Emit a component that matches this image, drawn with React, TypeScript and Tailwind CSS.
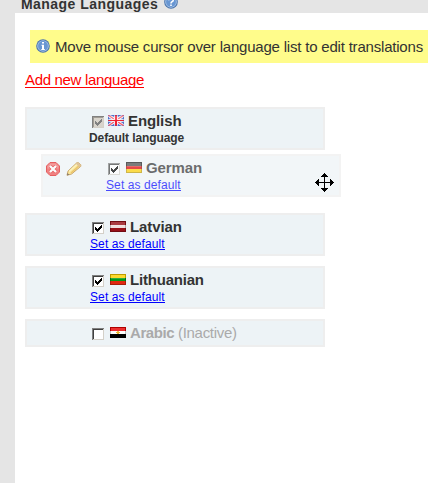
import type { ReactNode } from "react";

function Flag({ children, frame = "#000000" }: { children: ReactNode; frame?: string }) {
  return (
    <svg width="16" height="11" viewBox="0 0 16 11" shapeRendering="crispEdges" className="block shrink-0">
      {children}
      <path d="M1 1h14v4H1z" fill="#ffffff" opacity=".18" />
      <path d="M.5.5h15v10H.5z" fill="none" stroke={frame} opacity=".25" />
    </svg>
  );
}

const flags = {
  gb: (
    <Flag frame="#3355bb">
      <path d="M0 0h16v11H0z" fill="#5878cc" />
      <path d="M0 0l16 11M16 0L0 11" stroke="#fff" strokeWidth="3" shapeRendering="auto" />
      <path d="M0 0l16 11M16 0L0 11" stroke="#f06070" strokeWidth="1.4" shapeRendering="auto" />
      <path d="M6 0h4v11H6zM0 4h16v3H0z" fill="#fff" opacity=".75" />
      <path d="M7 0h2v11H7zM0 5h16v1H0z" fill="#ee2233" />
    </Flag>
  ),
  de: (
    <Flag>
      <path d="M0 0h16v4H0z" fill="#222" />
      <path d="M0 4h16v3H0z" fill="#e00000" />
      <path d="M0 7h16v4H0z" fill="#ffd000" />
    </Flag>
  ),
  lv: (
    <Flag>
      <path d="M0 0h16v11H0z" fill="#981018" />
      <path d="M0 4h16v3H0z" fill="#f0dede" />
    </Flag>
  ),
  lt: (
    <Flag>
      <path d="M0 0h16v4H0z" fill="#fcd000" />
      <path d="M0 4h16v3H0z" fill="#009a18" />
      <path d="M0 7h16v4H0z" fill="#e02810" />
    </Flag>
  ),
  eg: (
    <Flag>
      <path d="M0 0h16v4H0z" fill="#e80000" />
      <path d="M0 4h16v3H0z" fill="#fff" />
      <path d="M0 7h16v4H0z" fill="#000" />
      <path d="M7 4h2v3H7zM6 5h4v1H6z" fill="#e8b830" />
    </Flag>
  ),
};

function Check({ checked = true, disabled = false }: { checked?: boolean; disabled?: boolean }) {
  return (
    <svg width="12" height="12" viewBox="0 0 12 12" shapeRendering="crispEdges" className="block shrink-0">
      <path d="M0 0h12v12H0z" fill={disabled ? "#d8d4cc" : "#ffffff"} />
      <path d="M0 12V0h12v1H1v11z" fill="#808080" />
      <path d="M1 11V1h10v1H2v9z" fill={disabled ? "#a09c94" : "#404040"} />
      <path d="M1 11h10V1h1v11H1z" fill="#d4d0c8" />
      {checked && (
        <path
          d="M3 5h1v3H3zM4 6h1v3H4zM5 7h1v3H5zM6 6h1v3H6zM7 5h1v3H7zM8 4h1v3H8zM9 3h1v3H9z"
          fill={disabled ? "#808080" : "#000"}
        />
      )}
    </svg>
  );
}

function Badge({ kind }: { kind: "info" | "help" }) {
  return (
    <svg width="14" height="14" viewBox="0 0 14 14" className="block shrink-0">
      <circle cx="7" cy="7" r="6.8" fill="#4a74ac" />
      <circle cx="7" cy="7" r="5.8" fill="#a5c3e8" />
      <circle cx="7" cy="7" r="4.9" fill="#6896d2" />
      {kind === "info" ? (
        <path d="M6 3h2v1.6H6zM5.5 5.8H8V10h.8v1H5.3v-1H6V6.8h-.5z" fill="#fff" />
      ) : (
        <path d="M4.8 5.2C4.8 2.7 9.2 2.7 9.2 5.2 9.2 6.8 7 6.6 7 8.4M7 9.4V11" fill="none" stroke="#fff" strokeWidth="1.6" />
      )}
    </svg>
  );
}

function DeleteIcon() {
  return (
    <svg width="14" height="14" viewBox="0 0 14 14" className="block">
      <path d="M4 .5h6L13.5 4v6L10 13.5H4L.5 10V4z" fill="#f05050" stroke="#e02020" />
      <path d="M4.2 1.5h5.6l2.7 2.7v2.3h-11V4.2z" fill="#f47878" />
      <path d="M4.2 4.2l5.6 5.6M9.8 4.2L4.2 9.8" stroke="#e02525" strokeWidth="3.8" />
      <path d="M4 4l6 6M10 4l-6 6" stroke="#fff" strokeWidth="2.3" />
    </svg>
  );
}

function PencilIcon() {
  return (
    <svg width="16" height="14" viewBox="0 0 16 14" className="block">
      <path d="M1 13.3l1-4.2L10.8.8h1.8l2.2 2v1.5L5.6 12z" fill="#ffdf70" stroke="#b07820" strokeWidth=".9" />
      <path d="M3.2 9.5l8.4-7.8" stroke="#fff2a8" strokeWidth="1.5" />
      <path d="M5 11l8.3-7.6" stroke="#e8b030" strokeWidth="1.3" />
      <path d="M10.8.8h1.8l2.2 2v1.5l-1.4.9-3.5-3.4z" fill="#d9b070" />
      <path d="M1 13.3l.6-2.4 1.7 1.8z" fill="#554433" />
    </svg>
  );
}

function SetDefault() {
  return (
    <a className="block h-[13px] w-[75px] border-b border-[#0000ff] text-[12px] leading-[14px] tracking-[0.1px] text-[#0000ff]">
      Set as default
    </a>
  );
}

function Row({ flag, name, track, disabled }: { flag: keyof typeof flags; name: string; track: string; disabled?: boolean }) {
  return (
    <div className="h-[43px] w-[300px] border-2 border-[#eeeeee] bg-[#edf3f6] pl-[63px] text-[#333333]">
      <div className="flex h-[20px] items-start pt-[6px]">
        <div className={disabled ? "ml-[2px] mr-1 pt-px" : "ml-[2px] mr-[6px] pt-px"}>
          <Check disabled={disabled} />
        </div>
        {flags[flag]}
        <span className={`-mt-[3px] ml-1 text-[15px] leading-[17px] font-bold ${track}`}>{name}</span>
      </div>
      {disabled ? (
        <div className="-ml-px pt-[2px] text-[12px] leading-[14px] font-bold tracking-[-0.1px]">Default language</div>
      ) : (
        <div className="pt-[2px]"><SetDefault /></div>
      )}
    </div>
  );
}

export default function App() {
  return (
    <div className="h-[483px] w-[428px] overflow-hidden bg-[#e5e5e5] pl-[15px] font-['Liberation_Sans',sans-serif] whitespace-nowrap">
      <header className="flex h-[13px] items-start pl-[6px] text-[#333333]">
        <h1 className="-mt-[5px] w-[143px] text-[14px] leading-[18px] font-bold tracking-[0.45px]">Manage Languages</h1>
        <div className="-mt-[5px]"><Badge kind="help" /></div>
      </header>
      <main className="h-[470px] bg-white pt-[17px] pl-[10px]">
        <div className="ml-[5px] flex h-[33px] items-center bg-[#fffc8b] pl-[6px] text-[#333333]">
          <div className="-mt-px mr-[5px]"><Badge kind="info" /></div>
          <span className="text-[15px] leading-[18px] tracking-[-0.2px]">Move mouse cursor over language list to edit translations</span>
        </div>
        <a className="mt-[8px] block h-[17px] w-[119px] border-b border-[#ff0000] text-[15px] leading-[18px] tracking-[-0.33px] text-[#ff0000]">
          Add new language
        </a>
        <div className="mt-[19px]">
          <Row flag="gb" name="English" track="tracking-[-0.1px]" disabled />
        </div>
        <div className="mt-1 ml-4 flex h-[43px] w-[300px] border-2 border-[#f3f3f3] bg-[#f2f6f8]">
          <div className="flex w-[63px] shrink-0 gap-[6px] pt-[6px] pl-[3px] opacity-70">
            <DeleteIcon />
            <PencilIcon />
          </div>
          <div className="shrink-0 text-[#333333] opacity-70">
            <div className="flex h-[20px] items-start pt-[6px]">
              <div className="mr-[6px] ml-[2px] pt-px"><Check /></div>
              {flags.de}
              <span className="-mt-[3px] ml-1 text-[15px] leading-[17px] font-bold tracking-[-0.1px]">German</span>
            </div>
            <div className="pt-[2px]"><SetDefault /></div>
          </div>
          <svg width="19" height="19" viewBox="0 0 19 19" className="mt-[17px] mr-[5px] ml-auto block shrink-0" shapeRendering="crispEdges">
            <path d="M9 0h1v19H9zM0 9h19v1H0zM8 1h3v1H8zM7 2h5v1H7zM6 3h7v1H6zM8 17h3v1H8zM7 16h5v1H7zM6 15h7v1H6zM1 8h1v3H1zM2 7h1v5H2zM3 6h1v7H3zM17 8h1v3h-1zM16 7h1v5h-1zM15 6h1v7h-1z" fill="#000" />
          </svg>
        </div>
        <div className="mt-4 flex flex-col gap-[10px]">
          <Row flag="lv" name="Latvian" track="tracking-[-0.1px]" />
          <Row flag="lt" name="Lithuanian" track="tracking-[-0.2px]" />
          <div className="flex h-[28px] w-[300px] items-start border-2 border-[#eeeeee] bg-[#edf3f6] pt-[6px] pl-[65px] text-[#aaaaaa]">
            <div className="mr-[6px] pt-px"><Check checked={false} /></div>
            {flags.eg}
            <span className="-mt-[3px] ml-1 w-[48px] text-[15px] leading-[17px] font-bold tracking-[-0.4px]">Arabic</span>
            <span className="-mt-[3px] text-[15px] leading-[17px] tracking-[-0.3px]">(Inactive)</span>
          </div>
        </div>
      </main>
    </div>
  );
}
